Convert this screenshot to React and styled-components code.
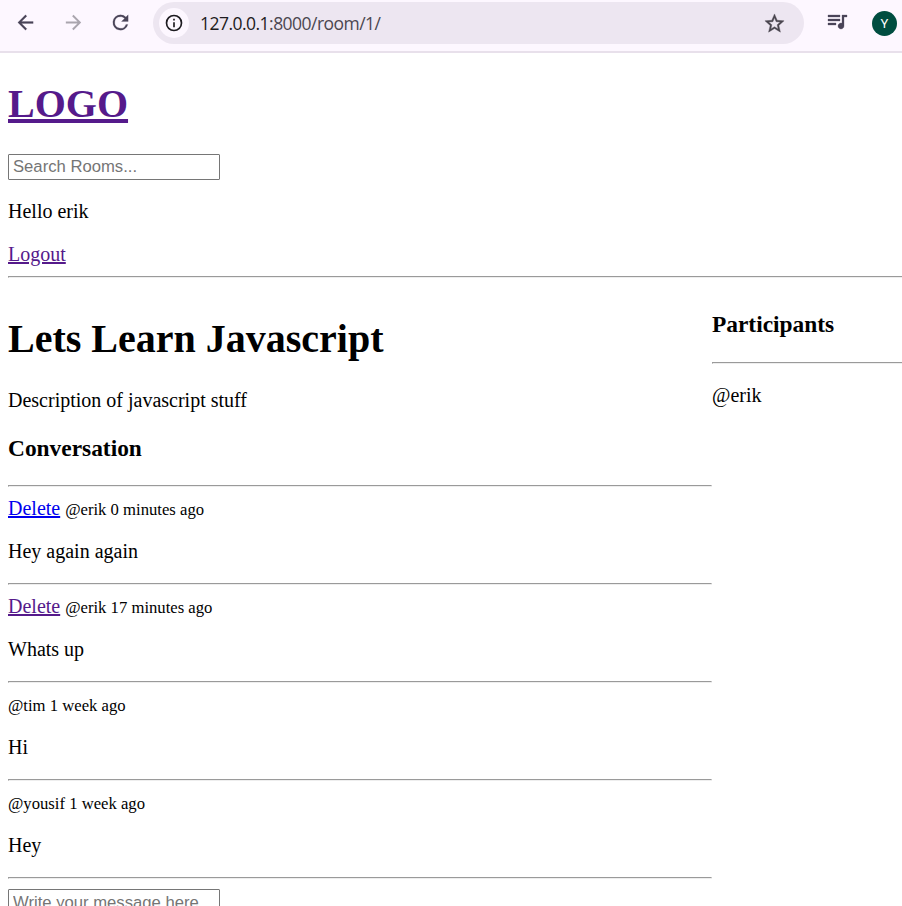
import React from "react";
import styled, { createGlobalStyle } from "styled-components";

const GlobalStyle = createGlobalStyle`
  html, body { margin: 0; background: #fff; overflow: hidden; }
`;

const Window = styled.div`
  height: 906px;
  overflow: hidden;
  color: #000;
  font: 20px/23px "Liberation Serif", "Times New Roman", serif;
`;

const Toolbar = styled.header`
  display: flex;
  box-sizing: border-box;
  height: 53px;
  padding-top: 2px;
  background: #fdf7ff;
  border-bottom: 2px solid #e8e0eb;
`;

const NavButtons = styled.nav`
  display: flex;
  align-items: center;
  gap: 24.5px;
  box-sizing: border-box;
  width: 153px;
  height: 41px;
  padding-left: 14px;
`;

const Icon = styled.svg`
  display: block;
  flex: none;
  width: ${(p) => p.$size || 23}px;
  height: ${(p) => p.$size || 23}px;
  fill: ${(p) => p.$color || "#4a4458"};
  stroke: ${(p) => p.$color || "#4a4458"};
  stroke-width: ${(p) => p.$weight || 0};
`;

const AddressBar = styled.div`
  display: flex;
  align-items: center;
  box-sizing: border-box;
  width: 651px;
  height: 42px;
  padding: 0 18px 0 6px;
  border-radius: 21px;
  background: #ede6f1;
`;

const SiteInfo = styled.span`
  display: flex;
  align-items: center;
  justify-content: center;
  width: 30px;
  height: 30px;
  margin-right: 11px;
  border-radius: 50%;
  background: #fdf7ff;
`;

const Address = styled.span`
  flex: 1;
  color: #4b4650;
  font: 17.5px/24px "Open Sans", sans-serif;
  letter-spacing: -0.53px;
`;

const Host = styled.span`
  color: #1d1b20;
`;

const Tools = styled.div`
  display: flex;
  align-items: center;
  gap: 23px;
  height: 42px;
  padding-left: 21px;
`;

const Avatar = styled.span`
  width: 25px;
  height: 25px;
  border-radius: 50%;
  background: #004d40;
  color: #fff;
  font: 13px/25px Roboto, sans-serif;
  text-align: center;
`;

const Page = styled.main`
  width: 940px;
  padding: 0 8px;
`;

const Title = styled.h1`
  margin: 0;
  padding: 28px 0 27px;
  font-size: 40px;
  line-height: 46px;
`;

const Subtitle = styled.h3`
  margin: 0;
  padding: 23px 0 ${(p) => p.$bottom}px;
  font-size: 23.4px;
  line-height: 27px;
`;

const Link = styled.a`
  color: ${(p) => (p.$visited ? "#551a8b" : "#0000ee")};
  text-decoration: underline;
`;

const Field = styled.input`
  display: block;
  box-sizing: border-box;
  width: 212px;
  height: 26px;
  margin: 0;
  padding: ${(p) => p.$top || 1}px 3px 1px 4px;
  border: 1px solid #767676;
  border-radius: 1px;
  font: 16.67px "Liberation Sans", Arial, sans-serif;
  &::placeholder { color: #757575; }
`;

const Paragraph = styled.p`
  margin: 20px 0;
`;

const Rule = styled.hr`
  margin: 10px 0;
  border: 1px solid;
  border-color: #9a9a9a #eee #eee #9a9a9a;
`;

const Columns = styled.div`
  display: grid;
  grid-template-columns: 704px 1fr;
`;

const Column = styled.section`
  min-width: 0;
`;

const Description = styled.p`
  margin: 0;
`;

const MessageHead = styled.div`
  height: 23px;
`;

const Meta = styled.small`
  font-size: 16.67px;
`;

const messages = [
  { user: "erik", when: "0 minutes ago", body: "Hey again again", own: true },
  { user: "erik", when: "17 minutes ago", body: "Whats up", own: true, visited: true },
  { user: "tim", when: "1 week ago", body: "Hi" },
  { user: "yousif", when: "1 week ago", body: "Hey" },
];

function Glyph({ d, ...rest }) {
  return (
    <Icon viewBox="0 0 24 24" aria-hidden="true" {...rest}>
      <path d={d} />
    </Icon>
  );
}

function BrowserBar() {
  return (
    <Toolbar>
      <NavButtons>
        <Glyph $weight={0.2} d="M20 11H7.83l5.59-5.59L12 4l-8 8 8 8 1.41-1.41L7.83 13H20v-2z" />
        <Glyph $color="#aaa5ae" d="M4 11h12.17l-5.59-5.59L12 4l8 8-8 8-1.41-1.41L16.17 13H4v-2z" />
        <Glyph $weight={0.2} d="M17.65 6.35A7.96 7.96 0 0 0 12 4a8 8 0 1 0 7.73 10h-2.08A6 6 0 1 1 12 6c1.66 0 3.14.69 4.22 1.78L13 11h7V4l-2.35 2.35z" />
      </NavButtons>
      <AddressBar>
        <SiteInfo>
          <Glyph
            $size={20}
            $color="#1d1b20"
            d="M11 17h2v-6h-2v6zm1-15a10 10 0 1 0 0 20 10 10 0 0 0 0-20zm0 18a8 8 0 1 1 0-16 8 8 0 0 1 0 16zM11 9h2V7h-2v2z"
          />
        </SiteInfo>
        <Address><Host>127.0.0.1</Host>:8000/room/1/</Address>
        <Glyph
          $color="#49454e"
          $weight={0.4}
          d="M22 9.24l-7.19-.62L12 2 9.19 8.63 2 9.24l5.46 4.73L5.82 21 12 17.27 18.18 21l-1.63-7.03L22 9.24zM12 15.4l-3.76 2.27 1-4.28-3.32-2.88 4.38-.38L12 6.1l1.71 4.04 4.38.38-3.32 2.88 1 4.28L12 15.4z"
        />
      </AddressBar>
      <Tools>
        <Glyph
          $size={24}
          $weight={0.3}
          d="M15 4H3v2h12V4zm0 4H3v2h12V8zM3 14h8v-2H3v2zM17 4v8.18c-.31-.11-.65-.18-1-.18-1.66 0-3 1.34-3 3s1.34 3 3 3 3-1.34 3-3V6h3V4h-5z"
        />
        <Avatar>Y</Avatar>
      </Tools>
    </Toolbar>
  );
}

export default function App() {
  return (
    <Window>
      <GlobalStyle />
      <BrowserBar />
      <Page>
        <Title><Link $visited>LOGO</Link></Title>
        <Field placeholder="Search Rooms..." />
        <Paragraph>Hello erik</Paragraph>
        <Link $visited>Logout</Link>
        <Rule />
        <Columns>
          <Column>
            <Title>Lets Learn Javascript</Title>
            <Description>Description of javascript stuff</Description>
            <Subtitle $bottom={13}>Conversation</Subtitle>
            <Rule />
            {messages.map((m) => (
              <React.Fragment key={m.user + m.when}>
                <MessageHead>
                  {m.own && <><Link $visited={m.visited}>Delete</Link>{" "}</>}
                  <Meta>@{m.user} {m.when}</Meta>
                </MessageHead>
                <Paragraph>{m.body}</Paragraph>
                <Rule />
              </React.Fragment>
            ))}
            <Field $top={3} placeholder="Write your message here..." />
          </Column>
          <Column>
            <Subtitle $bottom={14}>Participants</Subtitle>
            <Rule />
            <Paragraph>@erik</Paragraph>
          </Column>
        </Columns>
      </Page>
    </Window>
  );
}
